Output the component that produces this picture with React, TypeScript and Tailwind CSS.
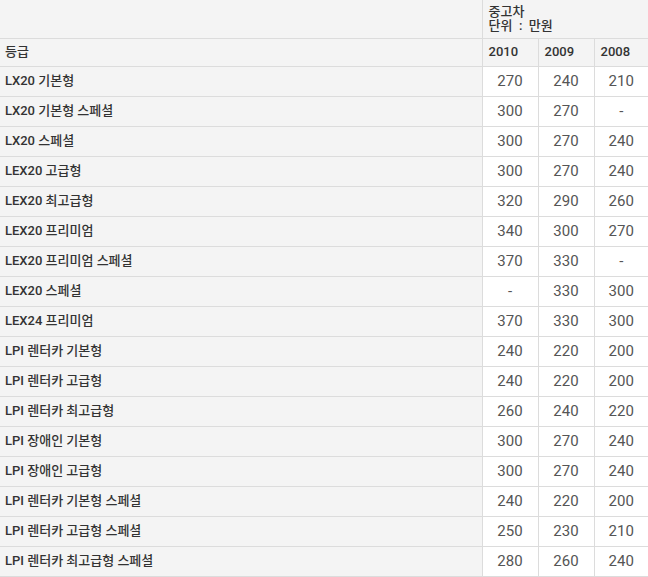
import React from 'react';

type Row = { name: string; v: [string, string, string] };

const rows: Row[] = [
  { name: 'LX20 기본형', v: ['270', '240', '210'] },
  { name: 'LX20 기본형 스페셜', v: ['300', '270', '-'] },
  { name: 'LX20 스페셜', v: ['300', '270', '240'] },
  { name: 'LEX20 고급형', v: ['300', '270', '240'] },
  { name: 'LEX20 최고급형', v: ['320', '290', '260'] },
  { name: 'LEX20 프리미엄', v: ['340', '300', '270'] },
  { name: 'LEX20 프리미엄 스페셜', v: ['370', '330', '-'] },
  { name: 'LEX20 스페셜', v: ['-', '330', '300'] },
  { name: 'LEX24 프리미엄', v: ['370', '330', '300'] },
  { name: 'LPI 렌터카 기본형', v: ['240', '220', '200'] },
  { name: 'LPI 렌터카 고급형', v: ['240', '220', '200'] },
  { name: 'LPI 렌터카 최고급형', v: ['260', '240', '220'] },
  { name: 'LPI 장애인 기본형', v: ['300', '270', '240'] },
  { name: 'LPI 장애인 고급형', v: ['300', '270', '240'] },
  { name: 'LPI 렌터카 기본형 스페셜', v: ['240', '220', '200'] },
  { name: 'LPI 렌터카 고급형 스페셜', v: ['250', '230', '210'] },
  { name: 'LPI 렌터카 최고급형 스페셜', v: ['280', '260', '240'] },
];

const years = ['2010', '2009', '2008'];

export default function App() {
  return (
    <div
      className="w-[648px] h-[577px] bg-white overflow-hidden"
      style={{ fontFamily: "Roboto, 'Noto Sans CJK KR', sans-serif" }}
    >
      <table className="w-[648px] table-fixed border-collapse">
        <colgroup>
          <col className="w-[482px]" />
          <col className="w-[56px]" />
          <col className="w-[56px]" />
          <col className="w-[54px]" />
        </colgroup>
        <thead>
          <tr className="h-[38px] border-b border-[#dcdcdc]">
            <th className="bg-[#f4f4f4]" />
            <th
              colSpan={3}
              className="bg-[#f4f4f4] border-l border-[#dcdcdc] text-left align-top pt-[5px] pl-[6px] text-[13px] leading-[14px] font-medium text-[#333] whitespace-pre"
            >
              {'중고차\n단위  :  만원'}
            </th>
          </tr>
          <tr className="h-[28px] border-b border-[#dcdcdc]">
            <th className="bg-[#f4f4f4] text-left pl-[5px] text-[13px] font-medium text-[#333]">등급</th>
            {years.map((y) => (
              <th
                key={y}
                className="bg-[#f4f4f4] border-l border-[#dcdcdc] text-left pl-[6px] text-[13px] font-medium text-[#333]"
              >
                {y}
              </th>
            ))}
          </tr>
        </thead>
        <tbody>
          {rows.map((r) => (
            <tr key={r.name} className="h-[30px] border-b border-[#dcdcdc]">
              <td className="bg-[#f4f4f4] text-left pl-[5px] text-[13px] font-medium text-[#333] whitespace-nowrap">
                {r.name}
              </td>
              {r.v.map((val, i) => (
                <td
                  key={i}
                  className="border-l border-[#dcdcdc] text-center text-[15px] text-[#555]"
                >
                  {val}
                </td>
              ))}
            </tr>
          ))}
        </tbody>
      </table>
    </div>
  );
}
